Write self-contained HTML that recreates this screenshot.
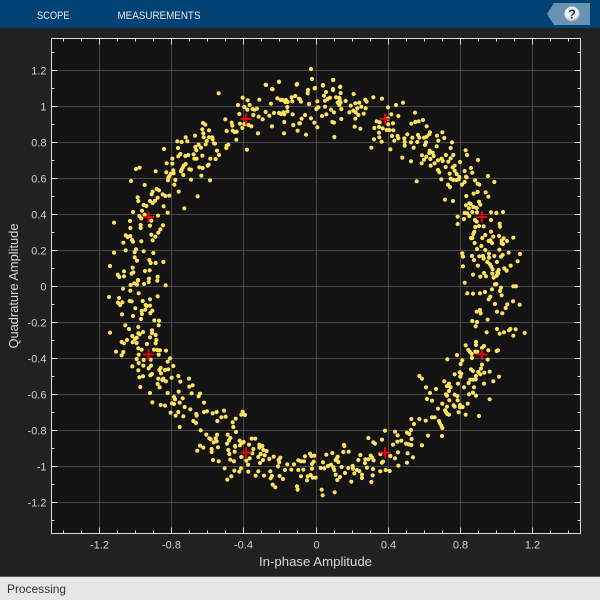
<!DOCTYPE html>
<html lang="en">
<head>
<meta charset="utf-8">
<title>Constellation Diagram</title>
<style>
html,body{margin:0;padding:0;width:600px;height:600px;overflow:hidden;background:#212121}
svg{display:block;position:absolute;left:0;top:0}
text{font-family:"Liberation Sans",sans-serif}
.t{font-size:11px;fill:#d0d0d0}
.d{fill:none;stroke:#fde25f;stroke-width:12.5;stroke-linecap:round}
</style>
</head>
<body>
<svg width="600" height="600" viewBox="0 0 600 600" xmlns="http://www.w3.org/2000/svg">
<defs>
<radialGradient id="hg" cx="45%" cy="35%" r="70%"><stop offset="0" stop-color="#ffffff"/><stop offset=".65" stop-color="#e8ecef"/><stop offset="1" stop-color="#8a9aa8"/></radialGradient>
</defs>
<rect width="600" height="600" fill="#212121"/>
<rect width="600" height="28" fill="#004273"/>
<text x="37" y="19" font-size="11" fill="#e2eaf0" textLength="32.5" lengthAdjust="spacingAndGlyphs">SCOPE</text>
<text x="117.5" y="19" font-size="11" fill="#e2eaf0" textLength="83" lengthAdjust="spacingAndGlyphs">MEASUREMENTS</text>
<path d="M554 3H590V25H554L547 14Z" fill="#6a92b2"/>
<circle cx="572" cy="14" r="7.5" fill="url(#hg)"/>
<text x="572" y="18.5" font-size="13" font-weight="bold" fill="#24384a" text-anchor="middle">?</text>

<rect x="51.5" y="38.5" width="529" height="495" fill="#131313"/>
<path stroke="#474747" stroke-width="1" fill="none" d="M99.5 38.5V533.5M171.5 38.5V533.5M243.5 38.5V533.5M316.5 38.5V533.5M388.5 38.5V533.5M460.5 38.5V533.5M532.5 38.5V533.5M51.5 70.5H580.5M51.5 106.5H580.5M51.5 142.5H580.5M51.5 178.5H580.5M51.5 214.5H580.5M51.5 250.5H580.5M51.5 286.5H580.5M51.5 322.5H580.5M51.5 358.5H580.5M51.5 394.5H580.5M51.5 430.5H580.5M51.5 466.5H580.5M51.5 502.5H580.5"/>

<g class="d">
<path transform="translate(100 80) scale(.3333)" d="M497 14h0M537 5h0M590 14h0M518 28h0M356 40h0M428 53h0M443 61h0M478 59h0M532 55h0M542 60h0M548 60h0M558 60h0M563 66h0M575 52h0M586 48h0M597 56h0M577 64h0M556 66h0M414 75h0M433 81h0M449 75h0M513 71h0M442 89h0M458 87h0M464 89h0M471 86h0M562 81h0M562 94h0M497 96h0M522 99h0M537 99h0M543 102h0M550 97h0M553 103h0M578 103h0M508 107h0M418 102h0M460 105h0M476 110h0M488 118h0M376 118h0M395 128h0M397 137h0M420 131h0M427 144h0M433 132h0M445 135h0M454 139h0M516 139h0M553 126h0M580 135h0M598 130h0M309 129h0M316 134h0M307 148h0M327 151h0M380 153h0M398 152h0M404 156h0M410 155h0M593 152h0M552 160h0M474 160h0M310 160h0M285 167h0M257 172h0M311 172h0M327 172h0M337 172h0M338 178h0M320 183h0M232 184h0M245 186h0M262 184h0M342 190h0M345 191h0M317 193h0M296 194h0M409 179h0M385 194h0M380 197h0M379 204h0M192 207h0M234 204h0M286 201h0M303 203h0M289 211h0M351 212h0M441 209h0M281 223h0M241 222h0M235 229h0M256 228h0M265 225h0M307 227h0M357 225h0M217 236h0M283 236h0M290 236h0M331 236h0M347 237h0M200 250h0M217 251h0M257 252h0M251 257h0M248 263h0M326 254h0M323 257h0M298 262h0M308 264h0M108 267h0M119 263h0M167 274h0M199 277h0M220 271h0M245 270h0M243 274h0M268 268h0M273 269h0M221 280h0M213 281h0M208 288h0M250 285h0M304 287h0M205 293h0M204 301h0M226 300h0M273 299h0M330 301h0M93 303h0M134 315h0M223 314h0M170 327h0M177 331h0M158 335h0M155 343h0M236 335h0M188 343h0M196 348h0M208 347h0M293 349h0M113 352h0M173 353h0M115 363h0M150 363h0M165 362h0M158 369h0M131 375h0M139 378h0M191 379h0M253 385h0M126 392h0M99 396h0M203 398h0M134 404h0M118 408h0M124 415h0M174 407h0M154 422h0M42 428h0M90 423h0M150 437h0M122 435h0M122 444h0M91 444h0M189 436h0M181 448h0M175 458h0M154 464h0M166 470h0M77 466h0M83 471h0M91 468h0M158 481h0M96 480h0M99 485h0M70 488h0M124 484h0M108 508h0M104 517h0M42 518h0M77 511h0M131 514h0M160 519h0M104 532h0M111 542h0M148 540h0M152 549h0M167 549h0M190 546h0M30 558h0M98 563h0M149 571h0M135 573h0M72 574h0M100 577h0M95 581h0M53 584h0M58 591h0M72 589h0M173 590h0M147 596h0M114 600h0"/>
<path transform="translate(300 80) scale(.3333)" d="M100 0h0M69 17h0M121 20h0M44 25h0M24 30h0M99 30h0M78 36h0M23 40h0M122 39h0M72 47h0M161 42h0M108 52h0M118 53h0M90 53h0M83 57h0M75 62h0M0 58h0M52 64h0M3 65h0M137 63h0M119 60h0M113 68h0M118 75h0M122 68h0M220 52h0M246 56h0M196 59h0M200 65h0M166 70h0M178 68h0M152 77h0M27 72h0M75 80h0M55 82h0M49 87h0M172 85h0M184 80h0M197 85h0M124 87h0M93 89h0M102 97h0M160 92h0M167 97h0M148 97h0M191 101h0M175 105h0M264 82h0M288 75h0M309 68h0M295 108h0M274 103h0M345 98h0M15 105h0M66 108h0M79 103h0M33 115h0M5 116h0M0 130h0M43 128h0M52 142h0M97 126h0M102 128h0M124 117h0M166 116h0M164 140h0M181 146h0M18 164h0M103 171h0M230 124h0M239 127h0M279 130h0M264 116h0M369 120h0M356 124h0M346 126h0M334 131h0M380 139h0M223 144h0M237 141h0M248 145h0M260 150h0M268 150h0M280 151h0M265 133h0M390 157h0M388 163h0M427 157h0M237 158h0M238 172h0M222 178h0M245 185h0M214 203h0M276 168h0M293 168h0M283 182h0M295 175h0M322 163h0M313 175h0M337 173h0M354 165h0M358 173h0M372 173h0M380 170h0M411 167h0M415 182h0M433 174h0M314 186h0M333 187h0M352 186h0M378 187h0M375 195h0M314 197h0M341 203h0M410 199h0M456 187h0M452 204h0M271 208h0M389 212h0M388 219h0M398 218h0M401 228h0M497 211h0M501 225h0M366 226h0M379 230h0M372 239h0M391 237h0M307 233h0M333 244h0M365 250h0M392 257h0M404 250h0M414 241h0M425 236h0M428 243h0M438 225h0M445 245h0M452 235h0M460 225h0M534 240h0M480 246h0M437 261h0M458 262h0M464 257h0M513 264h0M414 270h0M418 277h0M449 281h0M464 272h0M470 282h0M494 273h0M517 278h0M564 288h0M424 298h0M478 291h0M498 290h0M500 292h0M452 296h0M460 300h0M470 300h0M476 298h0M494 306h0M486 314h0M525 301h0M533 311h0M538 314h0M583 306h0M350 304h0M444 314h0M450 321h0M521 341h0M533 336h0M557 337h0M565 350h0M499 348h0M435 359h0M459 363h0M537 365h0M541 374h0M498 376h0M508 370h0M512 372h0M507 385h0M520 381h0M530 384h0M573 397h0M589 399h0M609 396h0M494 399h0M502 400h0M517 396h0M531 397h0M508 408h0M473 410h0M492 417h0M525 420h0M530 425h0M573 420h0M599 431h0M600 440h0M473 432h0M537 438h0M551 439h0M526 441h0M523 455h0M520 462h0M573 455h0M556 465h0M547 474h0M580 470h0M597 468h0M513 474h0M517 474h0M611 475h0M605 482h0M621 483h0M640 473h0M566 483h0M571 481h0M576 489h0M605 490h0M609 492h0M524 489h0M544 498h0M531 507h0M556 510h0M598 509h0M487 520h0M489 530h0M516 528h0M522 540h0M538 529h0M549 528h0M551 536h0M567 521h0M567 533h0M583 528h0M603 530h0M608 525h0M626 518h0M660 522h0M653 544h0M591 546h0M562 546h0M570 553h0M574 560h0M578 568h0M534 557h0M489 559h0M632 557h0M613 565h0M620 572h0M596 570h0M592 577h0M577 581h0M519 584h0M552 579h0M541 590h0M558 589h0M581 593h0M590 587h0M595 580h0"/>
<path transform="translate(100 280) scale(.3333)" d="M92 15h0M103 10h0M111 14h0M114 2h0M132 12h0M146 6h0M172 2h0M197 16h0M69 26h0M91 32h0M116 40h0M27 51h0M57 54h0M173 49h0M150 58h0M54 68h0M60 75h0M67 67h0M89 63h0M95 64h0M128 63h0M137 75h0M140 78h0M150 77h0M106 85h0M136 89h0M125 93h0M126 102h0M157 92h0M151 99h0M66 103h0M99 108h0M123 117h0M163 121h0M177 122h0M76 136h0M115 141h0M176 136h0M87 147h0M156 151h0M30 158h0M129 156h0M115 160h0M119 163h0M156 159h0M167 165h0M97 168h0M110 173h0M105 177h0M150 172h0M169 180h0M81 180h0M65 186h0M72 190h0M98 187h0M110 189h0M167 190h0M141 192h0M115 205h0M125 209h0M162 209h0M172 210h0M180 211h0M198 212h0M48 215h0M70 216h0M65 226h0M116 224h0M176 224h0M110 237h0M131 240h0M152 239h0M210 235h0M116 249h0M203 245h0M130 257h0M153 257h0M97 259h0M146 265h0M220 258h0M182 264h0M178 270h0M195 270h0M205 268h0M115 271h0M183 280h0M156 282h0M151 286h0M129 289h0M118 292h0M235 288h0M175 296h0M190 296h0M187 300h0M198 304h0M215 293h0M267 296h0M241 305h0M173 312h0M278 316h0M268 320h0M179 322h0M121 321h0M236 335h0M150 339h0M203 339h0M275 340h0M300 341h0M296 349h0M222 351h0M225 358h0M248 355h0M157 367h0M216 370h0M222 372h0M239 368h0M312 368h0M182 375h0M195 377h0M254 381h0M271 388h0M372 392h0M212 398h0M235 396h0M227 407h0M250 409h0M289 402h0M290 407h0M312 396h0M321 394h0M338 400h0M350 396h0M364 412h0M377 410h0M407 416h0M428 395h0M424 404h0M430 402h0M435 405h0M352 423h0M280 423h0M288 429h0M398 427h0M239 441h0M400 441h0M302 451h0M408 456h0M319 464h0M383 464h0M351 464h0M347 475h0M328 475h0M332 478h0M391 474h0M341 487h0M350 484h0M387 482h0M381 491h0M419 482h0M425 489h0M431 486h0M455 476h0M466 476h0M300 497h0M310 503h0M405 498h0M420 496h0M447 494h0M478 494h0M487 498h0M292 512h0M335 507h0M335 516h0M354 502h0M385 510h0M404 515h0M406 500h0M388 522h0M478 503h0M490 510h0M500 513h0M482 522h0M494 526h0M460 507h0M457 520h0M424 531h0M449 535h0M475 531h0M489 540h0M508 537h0M521 530h0M541 533h0M536 540h0M339 540h0M356 544h0M391 539h0M402 544h0M439 542h0M444 554h0M480 549h0M538 547h0M534 559h0M562 553h0M582 553h0M595 541h0M555 570h0M574 569h0M374 565h0M403 572h0M423 565h0M418 575h0M445 575h0M475 574h0M511 574h0M595 570h0M467 587h0M492 587h0M516 588h0M539 588h0M512 595h0M549 597h0M394 589h0M382 599h0M518 614h0M526 622h0M591 619h0M593 629h0"/>
<path transform="translate(300 280) scale(.3333)" d="M494 8h0M589 12h0M585 13h0M640 19h0M648 19h0M576 28h0M603 23h0M600 33h0M502 40h0M519 41h0M540 40h0M555 36h0M605 46h0M571 50h0M566 58h0M639 64h0M585 72h0M659 74h0M622 73h0M617 84h0M530 95h0M540 90h0M542 100h0M591 95h0M607 100h0M517 123h0M531 126h0M563 119h0M527 139h0M591 147h0M631 147h0M627 151h0M647 148h0M599 161h0M612 157h0M674 159h0M560 157h0M640 167h0M528 186h0M528 195h0M497 196h0M552 198h0M546 204h0M505 210h0M510 216h0M515 222h0M526 215h0M532 215h0M565 211h0M594 211h0M590 213h0M471 225h0M516 234h0M442 238h0M563 239h0M487 241h0M482 252h0M546 254h0M543 266h0M513 268h0M519 273h0M569 275h0M479 277h0M484 281h0M464 283h0M481 290h0M535 276h0M541 283h0M553 278h0M528 288h0M597 290h0M358 288h0M366 296h0M511 299h0M520 299h0M527 298h0M580 304h0M433 304h0M447 311h0M441 318h0M452 322h0M474 311h0M506 309h0M552 311h0M378 322h0M408 327h0M492 322h0M522 322h0M447 333h0M519 338h0M390 339h0M438 343h0M441 347h0M464 344h0M472 348h0M507 343h0M528 347h0M381 357h0M396 362h0M448 361h0M473 361h0M569 358h0M427 371h0M461 376h0M464 380h0M441 380h0M480 375h0M503 371h0M414 386h0M480 382h0M488 381h0M435 391h0M438 396h0M442 402h0M447 404h0M476 397h0M497 404h0M537 408h0M396 412h0M404 412h0M334 417h0M358 417h0M377 422h0M417 423h0M420 430h0M424 437h0M427 444h0M342 432h0M255 452h0M285 455h0M333 450h0M321 458h0M328 462h0M293 466h0M384 467h0M426 468h0M205 474h0M246 479h0M335 477h0M304 482h0M292 485h0M220 487h0M225 491h0M279 494h0M318 491h0M326 493h0M334 495h0M366 496h0M132 495h0M133 498h0M130 516h0M146 515h0M294 517h0M323 520h0M30 521h0M97 519h0M79 524h0M15 529h0M34 528h0M43 527h0M113 530h0M181 525h0M212 527h0M241 522h0M271 528h0M339 532h0M285 535h0M175 540h0M196 538h0M205 538h0M216 533h0M221 541h0M110 536h0M107 540h0M115 546h0M41 545h0M36 552h0M3 544h0M12 544h0M69 547h0M195 549h0M249 545h0M246 548h0M321 548h0M295 557h0M62 564h0M73 565h0M84 558h0M93 554h0M100 562h0M103 570h0M125 561h0M145 564h0M158 558h0M159 566h0M171 570h0M178 573h0M201 563h0M219 567h0M10 569h0M36 566h0M241 574h0M257 570h0M269 573h0M163 580h0M135 579h0M107 584h0M186 584h0M218 586h0M3 589h0M23 589h0M32 585h0M38 593h0M47 593h0M120 591h0M112 600h0M186 594h0M154 605h0M21 601h0M214 606h0M65 629h0M104 637h0M68 646h0"/>
<path style="stroke-width:4.2" d="M311 69h0M312 79h0M333 80h0M279 82h0M266 85h0M297 84h0M323 85h0M340 87h0M272 89h0M315 88h0M308 90h0M333 89h0"/>
</g>

<path stroke="#ff0000" stroke-width="1.8" fill="none" d="M240.5 119H251.5M246 113.5V124.5M379.5 119H390.5M385 113.5V124.5M143 217H154M148.5 211.5V222.5M476.5 217H487.5M482 211.5V222.5M143 354.5H154M148.5 349V360M476.5 354.5H487.5M482 349V360M240.5 452.5H251.5M246 447V458M379.5 452.5H390.5M385 447V458"/>

<path stroke="#d8d8d8" stroke-width="1" fill="none" d="M63.5 38.5v3M81.5 38.5v3M117.5 38.5v3M135.5 38.5v3M153.5 38.5v3M189.5 38.5v3M207.5 38.5v3M225.5 38.5v3M261.5 38.5v3M279.5 38.5v3M297.5 38.5v3M334.5 38.5v3M352.5 38.5v3M370.5 38.5v3M406.5 38.5v3M424.5 38.5v3M442.5 38.5v3M478.5 38.5v3M496.5 38.5v3M514.5 38.5v3M550.5 38.5v3M568.5 38.5v3M99.5 38.5v6M171.5 38.5v6M243.5 38.5v6M316.5 38.5v6M388.5 38.5v6M460.5 38.5v6M532.5 38.5v6M63.5 533.5v-3M81.5 533.5v-3M117.5 533.5v-3M135.5 533.5v-3M153.5 533.5v-3M189.5 533.5v-3M207.5 533.5v-3M225.5 533.5v-3M261.5 533.5v-3M279.5 533.5v-3M297.5 533.5v-3M334.5 533.5v-3M352.5 533.5v-3M370.5 533.5v-3M406.5 533.5v-3M424.5 533.5v-3M442.5 533.5v-3M478.5 533.5v-3M496.5 533.5v-3M514.5 533.5v-3M550.5 533.5v-3M568.5 533.5v-3M99.5 533.5v-6M171.5 533.5v-6M243.5 533.5v-6M316.5 533.5v-6M388.5 533.5v-6M460.5 533.5v-6M532.5 533.5v-6M51.5 52.5h3M51.5 88.5h3M51.5 124.5h3M51.5 160.5h3M51.5 196.5h3M51.5 232.5h3M51.5 268.5h3M51.5 304.5h3M51.5 340.5h3M51.5 376.5h3M51.5 412.5h3M51.5 448.5h3M51.5 484.5h3M51.5 520.5h3M51.5 70.5h6M51.5 106.5h6M51.5 142.5h6M51.5 178.5h6M51.5 214.5h6M51.5 250.5h6M51.5 286.5h6M51.5 322.5h6M51.5 358.5h6M51.5 394.5h6M51.5 430.5h6M51.5 466.5h6M51.5 502.5h6M580.5 52.5h-3M580.5 88.5h-3M580.5 124.5h-3M580.5 160.5h-3M580.5 196.5h-3M580.5 232.5h-3M580.5 268.5h-3M580.5 304.5h-3M580.5 340.5h-3M580.5 376.5h-3M580.5 412.5h-3M580.5 448.5h-3M580.5 484.5h-3M580.5 520.5h-3M580.5 70.5h-6M580.5 106.5h-6M580.5 142.5h-6M580.5 178.5h-6M580.5 214.5h-6M580.5 250.5h-6M580.5 286.5h-6M580.5 322.5h-6M580.5 358.5h-6M580.5 394.5h-6M580.5 430.5h-6M580.5 466.5h-6M580.5 502.5h-6"/>
<rect x="51.5" y="38.5" width="529" height="495" fill="none" stroke="#dcdcdc" stroke-width="1"/>

<g class="t" text-anchor="end">
<text x="46.5" y="74.5">1.2</text>
<text x="46.5" y="110.5">1</text>
<text x="46.5" y="146.5">0.8</text>
<text x="46.5" y="182.5">0.6</text>
<text x="46.5" y="218.5">0.4</text>
<text x="46.5" y="254.5">0.2</text>
<text x="46.5" y="290.5">0</text>
<text x="46.5" y="326.5">-0.2</text>
<text x="46.5" y="362.5">-0.4</text>
<text x="46.5" y="398.5">-0.6</text>
<text x="46.5" y="434.5">-0.8</text>
<text x="46.5" y="470.5">-1</text>
<text x="46.5" y="506.5">-1.2</text>
</g>
<g class="t" text-anchor="middle">
<text x="99.5" y="548.5">-1.2</text>
<text x="171.5" y="548.5">-0.8</text>
<text x="243.5" y="548.5">-0.4</text>
<text x="316.5" y="548.5">0</text>
<text x="388.5" y="548.5">0.4</text>
<text x="460.5" y="548.5">0.8</text>
<text x="532.5" y="548.5">1.2</text>
</g>
<text x="259" y="566" font-size="13" fill="#d8d8d8" textLength="113" lengthAdjust="spacingAndGlyphs">In-phase Amplitude</text>
<text transform="translate(18 348.5) rotate(-90)" font-size="13" fill="#d8d8d8" textLength="125" lengthAdjust="spacingAndGlyphs">Quadrature Amplitude</text>

<rect x="0" y="577" width="600" height="23" fill="#e6e6e6"/>
<rect x="0" y="576" width="600" height="1" fill="#555555"/>
<text x="7" y="593" font-size="12" fill="#333333" textLength="59" lengthAdjust="spacingAndGlyphs">Processing</text>
</svg>
</body>
</html>
